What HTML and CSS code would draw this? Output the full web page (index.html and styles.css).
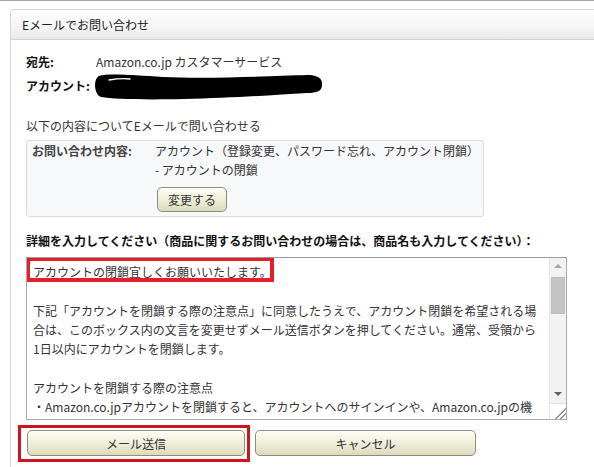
FILE: index.html
```html
<!DOCTYPE html>
<html lang="ja">
<head>
    <meta charset="UTF-8">
    <meta name="viewport" content="width=device-width, initial-scale=1.0">
    <title>Eメールでお問い合わせ</title>
    <link rel="stylesheet" href="styles.css">
</head>
<body>
    <div class="topline"></div>

    <div class="panel">
        <div class="panel-head">Eメールでお問い合わせ</div>

        <div class="panel-body">
            <div class="meta-row">
                <span class="meta-label">宛先:</span>
                <span class="meta-value">Amazon.co.jp カスタマーサービス</span>
            </div>
            <div class="meta-row">
                <span class="meta-label">アカウント:</span>
                <span class="meta-value">
                    <!-- blacked out account name -->
                    <svg class="redact" width="232" height="27" viewBox="0 0 232 27">
                        <path d="M6,3 C14,0 40,2 70,4 C120,6 180,3 214,2 C224,2 230,5 229,12 C229,18 224,20 214,20 C180,22 140,25 90,26 C50,27 20,26 8,24 C1,22 0,6 6,3 Z" fill="#000"/>
                        <path d="M16,7 C22,6 30,5 37,6" stroke="#fff" stroke-width="1.4" fill="none" stroke-linecap="round"/>
                    </svg>
                </span>
            </div>

            <p class="intro">以下の内容についてEメールで問い合わせる</p>

            <div class="topic">
                <div class="topic-label">お問い合わせ内容:</div>
                <div class="topic-value">
                    <div class="topic-line">アカウント（登録変更、パスワード忘れ、アカウント閉鎖）</div>
                    <div class="topic-line">- アカウントの閉鎖</div>
                    <button class="btn btn-small">変更する</button>
                </div>
            </div>

            <p class="detail-label">詳細を入力してください（商品に関するお問い合わせの場合は、商品名も入力してください）：</p>

            <div class="message">
                <div class="message-text">
                    <div class="line">アカウントの閉鎖宜しくお願いいたします。</div>
                    <div class="line">&nbsp;</div>
                    <div class="line">下記「アカウントを閉鎖する際の注意点」に同意したうえで、アカウント閉鎖を希望される場</div>
                    <div class="line">合は、このボックス内の文言を変更せずメール送信ボタンを押してください。通常、受領から</div>
                    <div class="line">1日以内にアカウントを閉鎖します。</div>
                    <div class="line">&nbsp;</div>
                    <div class="line">アカウントを閉鎖する際の注意点</div>
                    <div class="line">・Amazon.co.jpアカウントを閉鎖すると、アカウントへのサインインや、Amazon.co.jpの機</div>
                </div>

                <div class="scrollbar">
                    <div class="scroll-arrow up"></div>
                    <div class="scroll-track">
                        <div class="scroll-thumb"></div>
                    </div>
                    <div class="scroll-arrow down"></div>
                    <div class="scroll-grip"></div>
                </div>

                <div class="mark mark-line"></div>
            </div>

            <div class="actions">
                <button class="btn btn-wide">メール送信</button>
                <button class="btn btn-wide btn-cancel">キャンセル</button>
                <div class="mark mark-button"></div>
            </div>
        </div>
    </div>
</body>
</html>
```

FILE: styles.css
```css
body {
    margin: 0;
    background-color: #fff;
    font-family: "Noto Sans CJK JP", "Liberation Sans", sans-serif;
    font-size: 12px;
    color: #333;
    overflow: hidden;
}

.topline {
    height: 1px;
    background-color: #a3a3a3;
}

/* the panel runs on past the right and bottom edge of the window */
.panel {
    margin: 8px 0 0 10px;
    width: 583px;
    height: 457px;
    border: 1px solid #d6d6d6;
    border-right: none;
    border-bottom: none;
    border-radius: 4px 0 0 0;
}

.panel-head {
    height: 29px;
    line-height: 29px;
    padding-left: 11px;
    color: #222;
    background: linear-gradient(#fefefe, #f6f6f6 55%, #e9e9e9);
    border-bottom: 1px solid #d2d2d2;
    border-radius: 4px 0 0 0;
}

.panel-body {
    padding: 10px 0 0 15px;
}

/* 宛先 / アカウント */
.meta-row {
    display: flex;
    height: 24px;
    line-height: 24px;
}

.meta-label {
    width: 70px;
    font-weight: bold;
    color: #111;
}

.meta-value {
    display: flex;
    align-items: center;
}

.redact {
    display: block;
    margin: 0 0 0 -3px;
}

.intro {
    margin: 19px 0 5px;
    line-height: 18px;
}

/* inquiry topic box */
.topic {
    display: flex;
    width: 451px;
    padding: 0 0 4px 5px;
    background-color: #f7f8fa;
    border: 1px solid #dcdcdc;
    border-radius: 3px;
}

.topic-label {
    width: 123px;
    line-height: 19px;
    font-weight: bold;
    color: #444;
}

.topic-line {
    line-height: 19px;
    white-space: nowrap;
}

.btn {
    font-family: inherit;
    font-size: 12px;
    color: #333;
    background: linear-gradient(#fdfdf4, #f1f0dc 45%, #dcdabb);
    border: 1px solid #8e8d7a;
    border-radius: 5px;
    box-shadow: inset 0 1px 0 #fff;
    padding: 0;
    cursor: pointer;
}

.btn-small {
    display: block;
    width: 70px;
    height: 25px;
    margin: 8px 0 0 2px;
}

.detail-label {
    margin: 15px 0 7px;
    line-height: 18px;
    font-weight: bold;
    color: #111;
}

/* message textarea */
.message {
    position: relative;
    width: 539px;
    height: 161px;
    border: 1px solid #a9a9a9;
    border-top-color: #999;
    overflow: hidden;
}

.message-text {
    padding: 4px 0 0 6px;
}

.line {
    line-height: 19.3px;
    white-space: nowrap;
}

.scrollbar {
    position: absolute;
    top: 0;
    right: 0;
    bottom: 0;
    width: 16px;
    display: flex;
    flex-direction: column;
    background-color: #f2f2f2;
    border-left: 1px solid #e4e4e4;
}

.scroll-arrow {
    height: 17px;
    position: relative;
}

.scroll-arrow::after {
    content: "";
    position: absolute;
    left: 4px;
    top: 6px;
    border-left: 4px solid transparent;
    border-right: 4px solid transparent;
}

.scroll-arrow.up::after {
    border-bottom: 4px solid #a6a6a6;
}

.scroll-arrow.down::after {
    border-top: 4px solid #606060;
}

.scroll-track {
    flex: 1;
    padding-top: 2px;
}

.scroll-thumb {
    height: 35px;
    margin: 0 1px;
    background-color: #c4c4c4;
    border: 1px solid #bdbdbd;
}

.scroll-grip {
    height: 15px;
    background:
        linear-gradient(135deg, transparent 62%, #9a9a9a 62%, #9a9a9a 68%, transparent 68%, transparent 80%, #9a9a9a 80%, #9a9a9a 86%, transparent 86%),
        #fff;
    border-top: 1px solid #e4e4e4;
}

/* red markup boxes drawn over the form */
.mark {
    position: absolute;
    pointer-events: none;
}

.mark-line {
    top: -1px;
    left: -1px;
    width: 240px;
    height: 17px;
    border: 4px solid #e4202b;
}

.actions {
    position: relative;
    display: flex;
    gap: 10px;
    margin: 10px 0 0 1px;
}

.btn-wide {
    width: 218px;
    height: 26px;
}

.btn-cancel {
    width: 221px;
}

.mark-button {
    top: -5px;
    left: -9px;
    width: 226px;
    height: 31px;
    border: 3px solid #d0141f;
}
```
